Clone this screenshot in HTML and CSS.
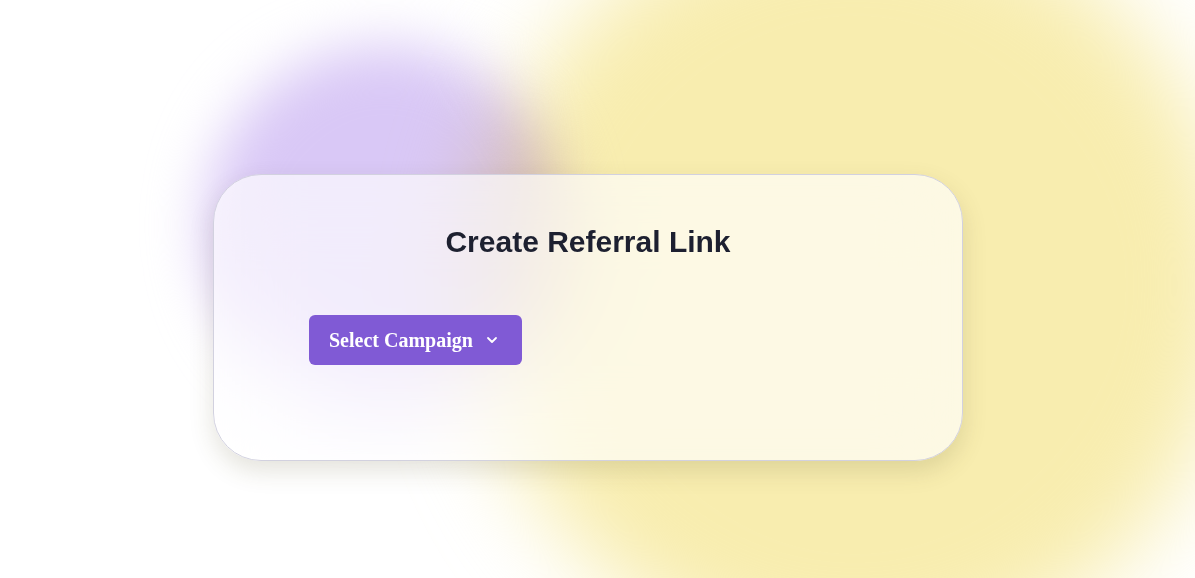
FILE: index.html
```html
<!DOCTYPE html>
<html lang="en">
<head>
<meta charset="utf-8">
<title>Create Referral Link</title>
<link rel="stylesheet" href="styles.css">
</head>
<body>
<div class="bg">
  <div class="blob blob-purple"></div>
  <div class="blob blob-yellow"></div>
</div>
<main class="page">
  <section class="card">
    <h1 class="title">Create Referral Link</h1>
    <div class="controls">
      <button class="select-btn" type="button">
        <span>Select Campaign</span>
        <svg class="chev" width="16" height="16" viewBox="0 0 16 16" aria-hidden="true">
          <path d="M4 6 L8 10 L12 6" fill="none" stroke="#fff" stroke-width="1.8" stroke-linecap="round" stroke-linejoin="round"/>
        </svg>
      </button>
    </div>
  </section>
</main>
</body>
</html>
```
FILE: styles.css
```css
* { box-sizing: border-box; }
html, body {
  margin: 0;
  padding: 0;
  width: 100%;
  height: 100%;
  overflow: hidden;
  background: #ffffff;
}
.bg {
  position: fixed;
  inset: 0;
  overflow: hidden;
  z-index: 0;
}
.blob {
  position: absolute;
  border-radius: 50%;
}
.blob-yellow {
  left: 475px;
  top: -95px;
  width: 760px;
  height: 760px;
  background: #f8edaf;
  filter: blur(45px);
}
.blob-purple {
  left: 205px;
  top: 45px;
  width: 360px;
  height: 360px;
  background: #d9c8f6;
  filter: blur(28px);
  z-index: 1;
  mix-blend-mode: multiply;
}
.page {
  position: relative;
  z-index: 2;
  padding: 174px 0 0 213px;
}
.card {
  width: 750px;
  height: 287px;
  border: 1px solid #d2d1df;
  border-radius: 48px;
  background: rgba(255, 255, 255, 0.66);
  backdrop-filter: blur(40px);
  box-shadow: 0 10px 24px rgba(90, 80, 40, 0.16);
  padding: 49px 48px 0 48px;
}
.title {
  margin: 0;
  font-family: "Liberation Sans", Arial, sans-serif;
  font-weight: 700;
  font-size: 30px;
  line-height: 36px;
  color: #1d2030;
  text-align: center;
}
.controls {
  display: flex;
  padding: 55px 48px 0 47px;
}
.select-btn {
  display: inline-flex;
  align-items: center;
  height: 50px;
  width: 213px;
  padding: 0 0 0 20px;
  border: none;
  border-radius: 6px;
  background: #805ad5;
  color: #ffffff;
  font-family: "Liberation Serif", "Times New Roman", serif;
  font-weight: 700;
  font-size: 20px;
  cursor: pointer;
}
.chev {
  margin-left: 11px;
  flex: none;
}
```
